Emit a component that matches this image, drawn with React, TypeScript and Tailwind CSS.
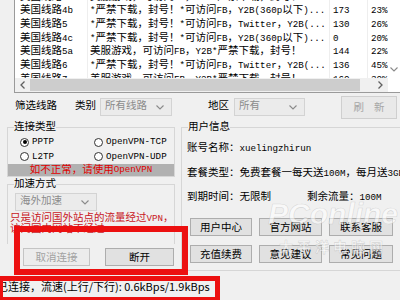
import React from "react";

const rows = [
  ["美国线路4a", "美服游戏，可访问FB，Y2B*严禁下载，封号！", "151", "21%"],
  ["美国线路4b", "*严禁下载，封号！*可访问FB，Y2B(360p以下)...", "173", "23%"],
  ["美国线路5", "*严禁下载，封号！*可访问FB，Twitter，Y2B(...", "130", "26%"],
  ["美国线路4c", "*严禁下载，封号！*可访问FB，Y2B(360p以下)...", "0", "20%"],
  ["美国线路5a", "美服游戏，可访问FB，Y2B*严禁下载，封号！", "144", "22%"],
  ["美国线路6", "*严禁下载，封号！*可访问FB，Twitter，Y2B(...", "136", "45%"],
  ["美国线路7", "美服游戏，可访问FB，Y2B*严禁下载，封号！", "160", "30%"],
];

// half-width latin runs are drawn a bit smaller, like the SimSun latin glyphs
const M = ({ t }: { t: string }) => (
  <>
    {t.split(/([\x20-\x7E]+)/).map((p, i) =>
      /^[\x20-\x7E]+$/.test(p) ? (
        <span key={i} className="text-[9.2px]">
          {p}
        </span>
      ) : (
        p
      )
    )}
  </>
);

const Chevron = ({ dir = "down" }: { dir?: "down" | "left" | "right" }) => {
  if (dir === "left")
    return (
      <svg width="5" height="8" viewBox="0 0 5 8">
        <path d="M4.5 0.5L1 4L4.5 7.5" stroke="#606060" strokeWidth="1.3" fill="none" />
      </svg>
    );
  if (dir === "right")
    return (
      <svg width="5" height="8" viewBox="0 0 5 8">
        <path d="M0.5 0.5L4 4L0.5 7.5" stroke="#606060" strokeWidth="1.3" fill="none" />
      </svg>
    );
  return (
    <svg width="8" height="5" viewBox="0 0 8 5">
      <path d="M0.5 0.5L4 4L7.5 0.5" stroke="#8a8a8a" strokeWidth="1.1" fill="none" />
    </svg>
  );
};

const Combo = ({ text, className }: { text: string; className: string }) => (
  <div className={`h-[18px] flex items-center justify-between pl-[4px] pr-[7px] bg-[#ebebeb] border border-[#d3d3d3] text-[#8c8c8c] ${className}`}>
    <span>{text}</span>
    <Chevron />
  </div>
);

const Radio = ({ label, checked, className }: { label: string; checked?: boolean; className?: string }) => (
  <div className={`flex items-center gap-[3px] whitespace-nowrap ${className || ""}`}>
    <div className="w-[9px] h-[9px] shrink-0 rounded-full border border-[#333] bg-white flex items-center justify-center">
      {checked && <div className="w-[4px] h-[4px] rounded-full bg-black" />}
    </div>
    <span>
      <M t={label} />
    </span>
  </div>
);

const Btn = ({ children, className, disabled }: { children: React.ReactNode; className: string; disabled?: boolean }) => (
  <div
    className={`h-[18px] flex items-center justify-center border font-['Noto_Sans_CJK_SC',sans-serif] text-[10.5px] leading-none ${
      disabled ? "bg-[#ececec] border-[#c4c4c4] text-[#a2a2a2]" : "bg-[#e1e1e1] border-[#adadad] text-black"
    } ${className}`}
  >
    {children}
  </div>
);

const GroupLabel = ({ text, className }: { text: string; className?: string }) => (
  <div className={`h-[12px] leading-[12px] pl-[7px] relative z-10 ${className || ""}`}>
    <span className="bg-[#f0f0f0]">{text}</span>
  </div>
);

export default function App() {
  return (
    <div className="relative w-[400px] h-[300px] overflow-hidden bg-[#f0f0f0] text-black font-['Liberation_Mono','Noto_Sans_CJK_SC',monospace] text-[10.5px]">
      {/* server list */}
      <div className="ml-[14px] h-[93px] flex flex-col bg-white border-l border-b border-[#9a9a9a] overflow-hidden">
        <div className="flex h-[78px] overflow-hidden">
          <div className="flex-1 flex flex-col mt-[-9.5px]">
            {rows.map((r, i) => (
              <div key={i} className="flex h-[13.7px] shrink-0 items-center leading-[13.7px] whitespace-nowrap">
                <div className="w-[73px] h-full pl-[5px] border-r border-[#eeeeee] overflow-hidden">
                  <M t={r[0]} />
                </div>
                <div className="w-[242px] h-full pl-[2px] border-r border-[#eeeeee] overflow-hidden">
                  <M t={r[1]} />
                </div>
                <div className="w-[38px] h-full pl-[3px] border-r border-[#eeeeee] overflow-hidden">
                  <M t={r[2]} />
                </div>
                <div className="w-[20px] h-full pl-[3px] overflow-hidden">
                  <M t={r[3]} />
                </div>
              </div>
            ))}
          </div>
          <div className="w-[12px] flex flex-col justify-end items-center pb-[6px]">
            <Chevron />
          </div>
        </div>
        <div className="flex h-[14px] bg-[#f0f0f0]">
          <div className="w-[15px] flex items-center justify-center">
            <Chevron dir="left" />
          </div>
          <div className="w-[330px] my-[1px] bg-[#cdcdcd]" />
          <div className="w-[13px]" />
          <div className="w-[15px] flex items-center justify-center">
            <Chevron dir="right" />
          </div>
          <div className="w-[12px] bg-white" />
        </div>
      </div>

      {/* filter row */}
      <div className="h-[28px] flex items-center pl-[15px] whitespace-nowrap">
        <span>筛选线路</span>
        <span className="ml-[18px]">类别</span>
        <Combo className="ml-[4px] w-[72px]" text="所有线路" />
        <span className="ml-[36px]">地区</span>
        <Combo className="ml-[5px] w-[71px]" text="所有" />
        <div className="ml-[36px] w-[56px] h-[23px] shrink-0 border border-[#cfcfcf] bg-[#e9e9e9] flex items-center justify-center pl-[10px] tracking-[10px] text-[#a6a6a6] font-['Noto_Sans_CJK_SC',sans-serif]">
          刷新
        </div>
      </div>

      {/* groups */}
      <div className="flex h-[151px]">
        <div className="w-[175px] shrink-0 pl-[7px] flex flex-col">
          <GroupLabel text="连接类型" />
          <div className="mt-[-6px] h-[50px] border border-[#d6d6d6] flex flex-col">
            <div className="pt-[7px] flex flex-col">
              <div className="flex h-[14.5px] items-center">
                <Radio checked label="PPTP" className="ml-[12px] w-[74px]" />
                <Radio label="OpenVPN-TCP" />
              </div>
              <div className="flex h-[14.5px] items-center">
                <Radio label="L2TP" className="ml-[12px] w-[74px]" />
                <Radio label="OpenVPN-UDP" />
              </div>
            </div>
            <div className="mt-auto h-[12px] bg-[#b1b1b1] text-[#e00000] flex items-center justify-center leading-[12px] whitespace-nowrap">
              <M t="如不正常，请使用OpenVPN" />
            </div>
          </div>

          <GroupLabel text="加速方式" className="mt-[1px]" />
          <div className="mt-[-6px] h-[60px] border border-b-0 border-[#d6d6d6] pt-[8px]">
            <Combo className="ml-[7px] w-[82px]" text="海外加速" />
            <div className="mt-[2px] pl-[2px] text-[#c8161d] leading-[11px]">
              <M t="只是访问国外站点的流量经过VPN，访问国内网站不经过VPN" />
            </div>
          </div>
          <div className="mt-[4px] flex pl-[16px] gap-[15px]">
            <Btn className="w-[67px]" disabled>
              取消连接
            </Btn>
            <Btn className="w-[69px]">断开</Btn>
          </div>
        </div>

        <div className="ml-[6px] w-[230px] shrink-0 flex flex-col">
          <GroupLabel text="用户信息" />
          <div className="mt-[-6px] h-[144px] border border-r-0 border-[#d6d6d6] pt-[14px]">
            <div className="pl-[5px] flex flex-col gap-[11.5px] leading-[12px] whitespace-nowrap">
              <div>
                <M t="账号名称：xuelingzhirun" />
              </div>
              <div>
                <M t="套餐类型：免费套餐一每天送100M，每月送3GB流量" />
              </div>
              <div className="flex">
                <span className="w-[120px]">到期时间：无限制</span>
                <span>
                  <M t="剩余流量：100M" />
                </span>
              </div>
            </div>
            <div className="mt-[14px] pl-[8px] grid grid-cols-[62px_63px_64px] gap-x-[7px] gap-y-[9px]">
              <Btn className="w-full">用户中心</Btn>
              <Btn className="w-full">官方网站</Btn>
              <Btn className="w-full">联系客服</Btn>
              <Btn className="w-full">充值续费</Btn>
              <Btn className="w-full">意见建议</Btn>
              <Btn className="w-full">常见问题</Btn>
            </div>
          </div>
        </div>
      </div>

      {/* status bar */}
      <div className="h-[28px] flex items-center ml-[-3px] whitespace-nowrap font-['Noto_Sans_CJK_SC',sans-serif] text-[11px]">
        已连接，流速(上行/下行): 0.6kBps/1.9kBps
      </div>

      {/* watermark */}
      <div className="absolute left-[268px] top-[198px] flex flex-col items-center pointer-events-none font-['Liberation_Sans',sans-serif] text-white/55 [-webkit-text-stroke:0.6px_rgba(140,140,140,0.3)]">
        <span className="text-[30px] italic font-bold leading-[32px]">PConline</span>
        <span className="mt-[8px] text-[14px] font-bold tracking-[4px] font-['Noto_Sans_CJK_SC',sans-serif] leading-[16px]">太平洋电脑网</span>
      </div>

      {/* red annotation boxes */}
      <div className="absolute left-[14px] top-[226px] w-[174px] h-[49px] border-[6px] border-[#ec1010]" />
      <div className="absolute left-[-2px] top-[276px] w-[222px] h-[26px] border-[5px] border-[#ec1010]" />
    </div>
  );
}
